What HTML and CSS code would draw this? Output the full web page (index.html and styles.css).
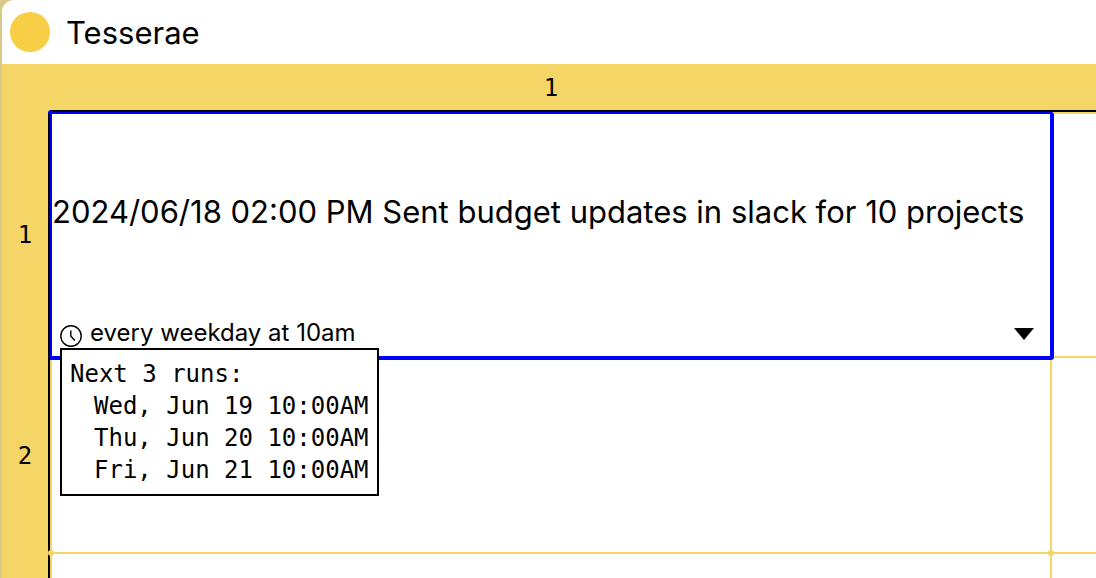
FILE: index.html
```html
<!DOCTYPE html>
<html lang="en">
<head>
<meta charset="utf-8">
<title>Tesserae</title>
<link rel="stylesheet" href="styles.css">
</head>
<body>
<div class="window">
  <header class="topbar">
    <span class="logo"></span>
    <h1 class="title">Tesserae</h1>
  </header>
  <table class="sheet">
    <colgroup><col class="col-label"><col><col class="col-next"></colgroup>
    <thead>
      <tr><th class="corner"></th><th class="col-head" scope="col">1</th><th class="col-head"></th></tr>
    </thead>
    <tbody>
      <tr class="row-tall">
        <th class="row-head" scope="row">1</th>
        <td class="cell cell-selected">
          <div class="content">
            <p class="value">2024/06/18 02:00 PM Sent budget updates in slack for 10 projects</p>
            <div class="schedule">
              <svg class="clock" viewBox="0 0 22 22" aria-hidden="true">
                <circle cx="11" cy="11" r="10.2"/>
                <path d="M10.8 5.5V11l4 4.5"/>
              </svg>
              <span class="rule">every weekday at 10am</span>
              <button class="toggle" type="button" aria-label="Open menu">
                <svg class="arrow" viewBox="0 0 20 12" aria-hidden="true"><path d="M0 0h20L10 12z"/></svg>
              </button>
              <div class="tooltip" role="tooltip">
                <p class="tip-title">Next 3 runs:</p>
                <ul class="runs">
                  <li>Wed, Jun 19 10:00AM</li>
                  <li>Thu, Jun 20 10:00AM</li>
                  <li>Fri, Jun 21 10:00AM</li>
                </ul>
              </div>
            </div>
          </div>
        </td>
        <td class="cell"></td>
      </tr>
      <tr class="row">
        <th class="row-head" scope="row">2</th>
        <td class="cell cell-joint"></td>
        <td class="cell"></td>
      </tr>
      <tr class="row">
        <th class="row-head"></th>
        <td class="cell"></td>
        <td class="cell"></td>
      </tr>
    </tbody>
  </table>
</div>
</body>
</html>
```
FILE: styles.css
```css
* {
  box-sizing: border-box;
}

body {
  margin: 0;
  background: #d9c98a;
  color: #000;
  font-family: Inter, "Liberation Sans", sans-serif;
}

.window {
  height: 100vh;
  margin-left: 2px;
  overflow: hidden;
  border-top-left-radius: 12px;
  background: #fff;
}

.topbar {
  display: flex;
  align-items: center;
  gap: 16px;
  height: 64px;
  padding: 0 8px;
}

.logo {
  width: 40px;
  height: 40px;
  border-radius: 50%;
  background: #f7ce46;
}

.title {
  margin: 0;
  padding-top: 2px;
  font-size: 31px;
  line-height: 40px;
  font-weight: 400;
}

.sheet {
  width: 100%;
  table-layout: fixed;
  border-spacing: 0;
}

.col-label {
  width: 48px;
}

.col-next {
  width: 44px;
}

.corner,
.col-head,
.row-head {
  padding: 0;
  background: #f5d565;
  font: 400 24px/32px "DejaVu Sans Mono", monospace;
}

.corner {
  height: 48px;
}

.col-head {
  padding-top: 2px;
  border-bottom: 2px solid #000;
}

.row-head {
  border-right: 2px solid #000;
}

.row-tall {
  height: 246px;
}

.row {
  height: 196px;
}

.cell {
  position: relative;
  padding: 0;
  border-right: 2px solid #f5d565;
  border-bottom: 2px solid #f5d565;
}

.cell:nth-child(2) {
  border-left: 2px solid #f5d565;
}

.cell:last-child {
  border-right: 0;
}

.row-tall .cell:last-child {
  border-top: 2px solid #f5d565;
}

.cell-joint::before,
.cell-joint::after {
  content: "";
  position: absolute;
  bottom: -4px;
  width: 6px;
  height: 6px;
  border-radius: 50%;
  background: #f5d565;
}

.cell-joint::before {
  left: -4px;
}

.cell-joint::after {
  right: -4px;
}

.cell-selected {
  z-index: 1;
}

.cell-selected::before {
  content: "";
  position: absolute;
  top: -2px;
  left: -4px;
  width: 4px;
  height: 4px;
  border-top-left-radius: 3px;
  background: #00f;
}

.cell-selected::after {
  content: "";
  position: absolute;
  inset: 0 -4px -4px -2px;
  border: 4px solid #00f;
  border-width: 2px 4px 4px 2px;
  border-radius: 0 3px 3px 0;
  pointer-events: none;
}

.content {
  display: flex;
  flex-direction: column;
  height: 244px;
}

.value {
  display: flex;
  flex: 1;
  align-items: center;
  margin: 0;
  font-size: 31px;
  line-height: 40px;
  white-space: nowrap;
}

.schedule {
  position: relative;
  z-index: 2;
  display: flex;
  align-items: center;
  gap: 8px;
  height: 44px;
  padding: 0 16px 0 8px;
}

.clock {
  width: 22px;
  height: 22px;
  margin-top: 4px;
  fill: none;
  stroke: #000;
  stroke-width: 1.4;
}

.rule {
  flex: 1;
  padding-bottom: 2px;
  font-size: 24px;
  line-height: 32px;
}

.toggle {
  display: flex;
  padding: 0;
  border: 0;
  background: none;
}

.arrow {
  width: 20px;
  height: 12px;
}

.tooltip {
  position: absolute;
  top: 36px;
  left: 8px;
  padding: 8px;
  border: 2px solid #000;
  background: #fff;
  font: 24px/32px "DejaVu Sans Mono", monospace;
  white-space: nowrap;
}

.tip-title {
  margin: 0;
}

.runs {
  margin: 0;
  padding: 0 0 0 24px;
  list-style: none;
}
```
